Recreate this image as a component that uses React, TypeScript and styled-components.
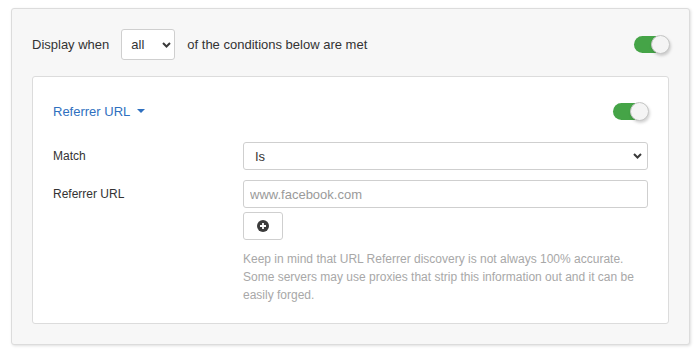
import styled, { createGlobalStyle } from "styled-components";

const GlobalStyle = createGlobalStyle`
  body {
    margin: 0;
    background: #fff;
    font-family: "Liberation Sans", Arial, Helvetica, sans-serif;
    color: #333;
  }
`;

const Page = styled.div`
  padding: 8px 10px 12px 11px;
`;

const Panel = styled.div`
  background: #f7f7f7;
  border: 1px solid #dcdcdc;
  border-radius: 3px;
  box-shadow: 1px 1px 3px rgba(0, 0, 0, 0.13);
  padding: 20px;
`;

const TopRow = styled.div`
  display: flex;
  align-items: center;
  height: 31px;
  font-size: 13px;
  gap: 12px;
`;

const Spacer = styled.div`
  flex: 1;
`;

const SelectWrap = styled.div<{ $w?: string }>`
  position: relative;
  width: ${(p) => p.$w || "100%"};
  height: 100%;
`;

const Select = styled.select<{ $pl: number }>`
  appearance: none;
  -webkit-appearance: none;
  width: 100%;
  height: 100%;
  box-sizing: border-box;
  border: 1px solid #cfcfcf;
  border-radius: 3px;
  background: #fff;
  font-family: inherit;
  font-size: 13px;
  color: #333;
  padding: 0 24px 0 ${(p) => p.$pl}px;
  outline: none;
`;

const Chevron = styled.svg<{ $r: number }>`
  position: absolute;
  right: ${(p) => p.$r}px;
  top: 50%;
  margin-top: -3px;
  width: 9px;
  height: 6px;
  pointer-events: none;
`;

const Track = styled.span`
  position: relative;
  display: inline-block;
  width: 35px;
  height: 17px;
  border-radius: 9px;
  background: #45a447;
  flex-shrink: 0;
`;

const Knob = styled.span`
  position: absolute;
  right: -1px;
  top: -1px;
  width: 17px;
  height: 17px;
  border-radius: 50%;
  background: #f4f4f4;
  border: 1px solid #c6c6c6;
  box-shadow: 1px 2px 3px rgba(0, 0, 0, 0.18);
`;

const Card = styled.div`
  margin-top: 16px;
  background: #fff;
  border: 1px solid #dcdcdc;
  border-radius: 3px;
  padding: 20px 20px 19px 20px;
`;

const CardHeader = styled.div`
  display: flex;
  align-items: center;
  justify-content: space-between;
  height: 28px;
`;

const Title = styled.a`
  display: inline-flex;
  align-items: center;
  gap: 7px;
  color: #2f70c0;
  font-size: 13px;
  text-decoration: none;
  cursor: pointer;
`;

const Caret = styled.span`
  width: 0;
  height: 0;
  border-left: 4px solid transparent;
  border-right: 4px solid transparent;
  border-top: 4px solid #2f70c0;
  margin-top: -1px;
`;

const FieldRow = styled.div<{ $mt: number }>`
  display: grid;
  grid-template-columns: 190px 1fr;
  margin-top: ${(p) => p.$mt}px;
`;

const Label = styled.div`
  font-size: 12px;
  height: 28px;
  display: flex;
  align-items: center;
`;

const Control = styled.div`
  display: flex;
  flex-direction: column;
  align-items: flex-start;
`;

const Box = styled.div`
  height: 28px;
  width: 100%;
`;

const Input = styled.input`
  width: 100%;
  height: 28px;
  box-sizing: border-box;
  border: 1px solid #cfcfcf;
  border-radius: 3px;
  padding: 0 6px;
  font-family: inherit;
  font-size: 13px;
  color: #333;
  outline: none;
  &::placeholder {
    color: #9a9a9a;
  }
`;

const AddButton = styled.button`
  margin-top: 4px;
  width: 40px;
  height: 28px;
  border: 1px solid #cfcfcf;
  border-radius: 3px;
  background: #fff;
  display: flex;
  align-items: center;
  justify-content: center;
  padding: 0;
`;

const Help = styled.p`
  margin: 10px 0 0;
  font-size: 12px;
  line-height: 18px;
  color: #a8a8a8;
`;

const ChevronIcon = ({ r }: { r: number }) => (
  <Chevron $r={r} viewBox="0 0 9 6">
    <path d="M1 1l3.5 3.5L8 1" fill="none" stroke="#3a3a3a" strokeWidth="2" />
  </Chevron>
);

const Toggle = () => (
  <Track>
    <Knob />
  </Track>
);

const App = () => {
  return (
    <Page>
      <GlobalStyle />
      <Panel>
        <TopRow>
          <span>Display when</span>
          <SelectWrap $w="54px">
            <Select $pl={9} defaultValue="all">
              <option value="all">all</option>
              <option value="any">any</option>
            </Select>
            <ChevronIcon r={4} />
          </SelectWrap>
          <span>of the conditions below are met</span>
          <Spacer />
          <Toggle />
        </TopRow>
        <Card>
          <CardHeader>
            <Title>
              Referrer URL <Caret />
            </Title>
            <Toggle />
          </CardHeader>
          <FieldRow $mt={17}>
            <Label>Match</Label>
            <Control>
              <Box>
                <SelectWrap>
                  <Select $pl={11} defaultValue="is">
                    <option value="is">Is</option>
                    <option value="isnot">Is not</option>
                  </Select>
                  <ChevronIcon r={6} />
                </SelectWrap>
              </Box>
            </Control>
          </FieldRow>
          <FieldRow $mt={10}>
            <Label>Referrer URL</Label>
            <Control>
              <Input placeholder="www.facebook.com" />
              <AddButton>
                <svg width="12" height="12" viewBox="0 0 12 12">
                  <circle cx="6" cy="6" r="6" fill="#3b3b3b" />
                  <path d="M6 3v6M3 6h6" stroke="#fff" strokeWidth="1.8" />
                </svg>
              </AddButton>
              <Help>
                Keep in mind that URL Referrer discovery is not always 100% accurate. Some servers may use
                proxies that strip this information out and it can be easily forged.
              </Help>
            </Control>
          </FieldRow>
        </Card>
      </Panel>
    </Page>
  );
};

export default App;
